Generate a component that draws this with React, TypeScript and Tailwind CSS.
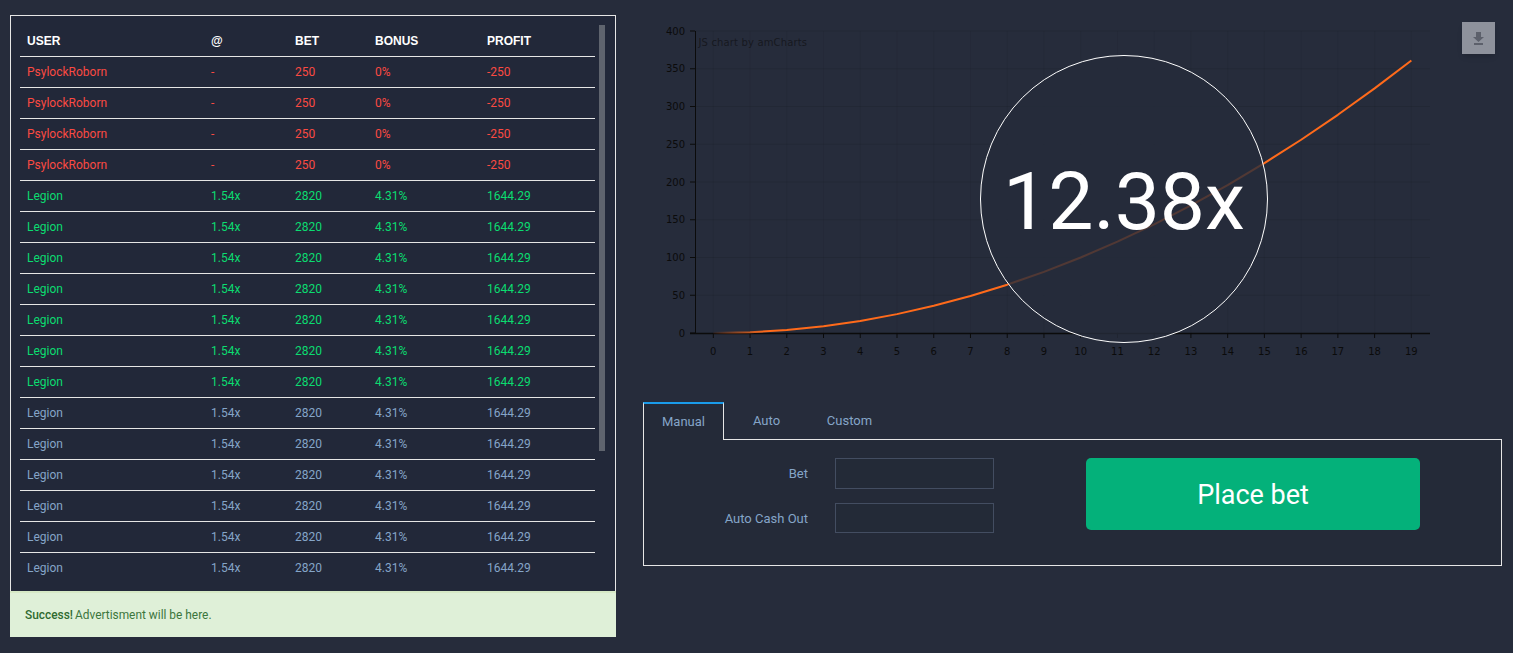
type Row = { user: string; at: string; bet: string; bonus: string; profit: string; color: string };

const lost: Row = { user: "PsylockRoborn", at: "-", bet: "250", bonus: "0%", profit: "-250", color: "text-[#fb4a42]" };
const won: Row = { user: "Legion", at: "1.54x", bet: "2820", bonus: "4.31%", profit: "1644.29", color: "text-[#0bdc70]" };
const idle: Row = { ...won, color: "text-[#85a5c8]" };

const rows: Row[] = [
    ...Array(4).fill(lost),
    ...Array(7).fill(won),
    ...Array(6).fill(idle),
];

const xTicks = Array.from({ length: 20 }, (_, i) => i);
const yTicks = [0, 50, 100, 150, 200, 250, 300, 350, 400];

// chart coords are relative to the svg, which starts at x=640 y=20
const px = (v: number) => 73.3 + v * 36.74;
const py = (v: number) => 313 - v * 0.755;

const curve = xTicks.map((v) => `${px(v)},${py(v * v)}`).join(" ");

function Chart() {
    return (
        <svg width="800" height="345" className="block" style={{ fontFamily: "'DejaVu Sans', sans-serif" }}>
            <defs>
                <linearGradient id="fade" gradientUnits="userSpaceOnUse" x1="73" y1="0" x2="125" y2="0">
                    <stop offset="0" stopColor="#ff6a1a" stopOpacity="0.05" />
                    <stop offset="1" stopColor="#ff6a1a" />
                </linearGradient>
            </defs>
            {yTicks.slice(1).map((t) => (
                <line key={t} x1="55" x2="790" y1={py(t)} y2={py(t)} stroke="#000" strokeOpacity="0.09" />
            ))}
            {xTicks.map((t) => (
                <line key={t} x1={px(t)} x2={px(t)} y1="11" y2="313" stroke="#000" strokeOpacity="0.05" />
            ))}
            <line x1="55.5" x2="55.5" y1="11" y2="314" stroke="#0b0b0b" />
            <line x1="50" x2="790" y1="313.5" y2="313.5" stroke="#0b0b0b" strokeWidth="1.5" />
            {yTicks.map((t) => (
                <g key={t}>
                    <line x1="50" x2="55" y1={py(t)} y2={py(t)} stroke="#0b0b0b" />
                    <text x="45" y={py(t) + 3.5} textAnchor="end" fontSize="10" fill="#0b0b0b">{t}</text>
                </g>
            ))}
            {xTicks.map((t) => (
                <g key={t}>
                    <line x1={px(t)} x2={px(t)} y1="313" y2="318" stroke="#0b0b0b" />
                    <text x={px(t)} y="335" textAnchor="middle" fontSize="10" fill="#0b0b0b">{t}</text>
                </g>
            ))}
            <text x="58.5" y="26" fontSize="10" letterSpacing="0.15" fill="#0b0b0b" fillOpacity="0.6">JS chart by amCharts</text>
            <polyline points={curve} fill="none" stroke="url(#fade)" strokeWidth="2" strokeLinejoin="round" />
        </svg>
    );
}

export default function App() {
    return (
        <div className="flex h-[653px] w-[1513px] overflow-hidden bg-[#262c3b] font-['Roboto',sans-serif] text-xs">
            <div className="ml-[10px] mt-[15px] w-[606px] shrink-0">
                <div className="relative h-[576px] border border-b-0 border-[#e6e6e6] bg-[#222839] pl-[9px] pt-[9px]">
                    <table className="w-[575px] table-fixed border-collapse">
                        <colgroup>
                            <col className="w-[184px]" />
                            <col className="w-[84px]" />
                            <col className="w-[80px]" />
                            <col className="w-[112px]" />
                            <col className="w-[115px]" />
                        </colgroup>
                        <thead>
                            <tr className="h-[31px] border-b border-[#e6e6e6] text-left font-['Liberation_Sans',sans-serif] font-bold text-white">
                                <th className="pl-[7px] pt-[2px]">USER</th>
                                <th className="pl-[7px] pt-[2px]">@</th>
                                <th className="pl-[7px] pt-[2px]">BET</th>
                                <th className="pl-[7px] pt-[2px]">BONUS</th>
                                <th className="pl-[7px] pt-[2px]">PROFIT</th>
                            </tr>
                        </thead>
                        <tbody>
                            {rows.map((r, i) => (
                                <tr key={i} className={`h-[31px] ${i < rows.length - 1 ? "border-b border-[#e6e6e6]" : ""} ${r.color}`}>
                                    <td className="pl-[7px]">{r.user}</td>
                                    <td className="pl-[7px]">{r.at}</td>
                                    <td className="pl-[7px]">{r.bet}</td>
                                    <td className="pl-[7px]">{r.bonus}</td>
                                    <td className="pl-[7px]">{r.profit}</td>
                                </tr>
                            ))}
                        </tbody>
                    </table>
                    <div className="absolute left-[588px] top-[9px] h-[426px] w-[6px] bg-[#5f646e]" />
                </div>
                <div className="flex h-[46px] items-center border-t-2 border-[#d6e9c6] bg-[#dff0d8] pl-[15px] pt-[2px] text-[11.9px] text-[#3c763d]">
                    <strong className="mr-[2px] font-medium text-[#2f6a30]">Success!</strong> Advertisment will be here.
                </div>
            </div>

            <div className="ml-[24px] w-[863px] shrink-0">
                <div className="relative mt-[20px] h-[345px]">
                    <Chart />
                    <div className="absolute left-[340px] top-[35px] flex h-[288px] w-[288px] items-center justify-center rounded-full border border-white bg-[#262c3b]/80 pt-[7px] text-[80.5px] leading-none text-white">
                        12.38x
                    </div>
                    <div className="absolute left-[822px] top-[2px] flex h-[32px] w-[33px] items-center justify-center bg-[#8e929c] shadow-md">
                        <svg width="11" height="13" viewBox="0 0 11 13" fill="#5c606b">
                            <path d="M3 0h5v5h3L5.5 10 0 5h3z" />
                            <rect x="1" y="11" width="9" height="2" />
                        </svg>
                    </div>
                </div>

                <div className="ml-[3px] mt-[37px] w-[859px]">
                    <div className="flex h-[38px] text-[13px] text-[#85a5c8]">
                        <div className="relative z-10 flex h-[38px] w-[81px] items-center justify-center border-x border-t-2 border-x-[#e6e6e6] border-t-[#1a9bea] bg-[#242a38]">
                            Manual
                        </div>
                        <div className="flex w-[85px] items-center justify-center">Auto</div>
                        <div className="flex w-[81px] items-center justify-center">Custom</div>
                    </div>
                    <div className="-mt-px flex h-[127px] border border-[#e6e6e6] bg-[#242a38] text-[13px] text-[#85a5c8]">
                        <div className="ml-[68px] mt-[18px] flex flex-col gap-[14px]">
                            <div className="flex items-center">
                                <span className="w-[96px] text-right">Bet</span>
                                <div className="ml-[27px] h-[31px] w-[159px] border border-[#434d61] bg-[#232a37]" />
                            </div>
                            <div className="flex items-center">
                                <span className="w-[96px] pt-[2px] text-right">Auto Cash Out</span>
                                <div className="ml-[27px] h-[30px] w-[159px] border border-[#434d61] bg-[#232a37]" />
                            </div>
                        </div>
                        <button className="ml-[92px] mt-[18px] h-[72px] w-[334px] rounded-[5px] bg-[#04b17a] pt-[4px] text-[27px] text-white">
                            Place bet
                        </button>
                    </div>
                </div>
            </div>
        </div>
    );
}
